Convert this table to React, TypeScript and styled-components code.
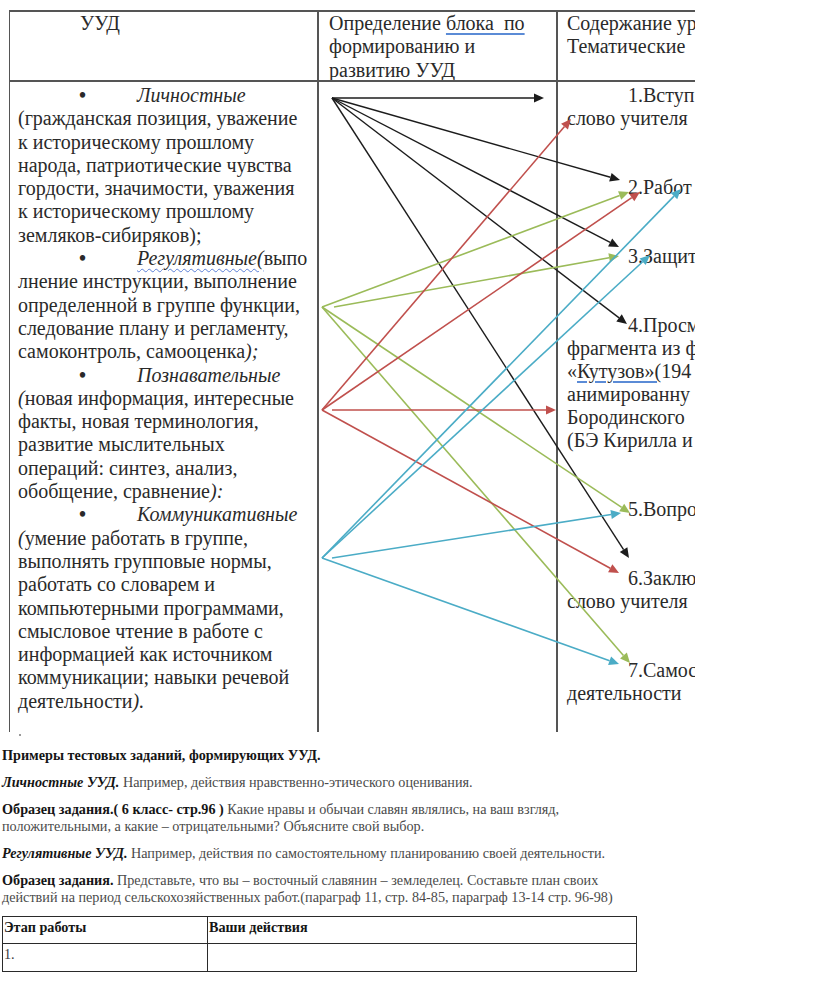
import React from "react";
import styled, { createGlobalStyle } from "styled-components";

const Global = createGlobalStyle`
  html, body { margin: 0; padding: 0; background: #ffffff; }
  body { font-family: "Liberation Serif", "Times New Roman", serif; color: #222; }
`;

const Page = styled.div`
  width: 816px;
  min-height: 1003px;
  overflow: hidden;
`;

const ScanWrap = styled.div`
  position: relative;
  margin: 10px 0 0 9px;
  width: 686px;
  height: 722px;
  overflow: hidden;
`;

const ScanTable = styled.div`
  display: grid;
  grid-template-columns: 309px 239px 240px;
  grid-template-rows: 70px 650px;
  width: 789px;
  border-top: 2px solid #555;
  border-left: 1.5px solid #555;
  border-bottom: 2px solid #555;
  box-sizing: border-box;
  font-size: 20px;
  line-height: 23.3px;
  color: #2a2a2a;
  font-family: "Liberation Serif", "Times New Roman", serif;
`;

const Cell = styled.div<{ $head?: boolean; $last?: boolean; $pad: number }>`
  box-sizing: border-box;
  padding: ${(p) => (p.$head ? "0px" : "2px")} 2px 0 ${(p) => p.$pad}px;
  border-right: ${(p) => (p.$last ? "none" : "2px solid #555")};
  border-bottom: ${(p) => (p.$head ? "2px solid #555" : "none")};
  white-space: nowrap;
  overflow: hidden;
`;

const HeadText = styled.div<{ $indent?: number }>`
  padding-left: ${(p) => p.$indent ?? 0}px;
`;

const Spell = styled.span`
  text-decoration: underline;
  text-decoration-color: #5b8bd6;
  text-decoration-thickness: 1.5px;
  text-underline-offset: 3px;
`;

const Wavy = styled.span`
  font-style: italic;
  text-decoration: underline wavy #5b7fd6;
  text-decoration-thickness: 1px;
  text-underline-offset: 3px;
`;

const Em = styled.em`
  font-style: italic;
`;

const BulletLine = styled.div`
  display: flex;
`;

const BulletDot = styled.span`
  margin-left: 61px;
  width: 58px;
  flex: none;
  font-weight: bold;
`;

const Lines = styled.div``;

const Item = styled.div<{ $before: number }>`
  margin-top: ${(p) => p.$before * 23}px;
  line-height: 23px;
`;

const ItemHead = styled.div`
  padding-left: 61px;
`;

const Arrows = styled.svg`
  position: absolute;
  top: 0;
  left: 0;
  pointer-events: none;
`;

const Speck = styled.div`
  height: 6px;
  position: relative;
  &::after {
    content: "";
    position: absolute;
    left: 19px;
    top: 2px;
    width: 2px;
    height: 2px;
    background: #9a9a9a;
  }
`;

const Doc = styled.div`
  width: 645px;
  padding: 9px 0 0 2px;
  font-size: 14.2px;
  line-height: 16.6px;
  color: #4a4a4a;
  font-family: "Liberation Serif", "Times New Roman", serif;
`;

const P = styled.p`
  margin: 0 0 10.5px;
`;

const B = styled.b`
  color: #151515;
  font-weight: bold;
`;

const BI = styled.b`
  color: #151515;
  font-weight: bold;
  font-style: italic;
`;

const PlanTable = styled.table`
  border-collapse: collapse;
  width: 635px;
  margin-top: 0;
  font-size: 14.2px;
  line-height: 16.6px;
`;

const Td = styled.td<{ $w?: number; $h: number }>`
  border: 1.5px solid #2a2a2a;
  padding: 2px 1px 0;
  vertical-align: top;
  height: ${(p) => p.$h}px;
  box-sizing: border-box;
  width: ${(p) => (p.$w ? `${p.$w}px` : "auto")};
  color: #3a3a3a;
`;

type Arrow = { from: [number, number]; to: [number, number] };
type Group = { color: string; width: number; arrows: Arrow[] };

const groups: Group[] = [
  {
    color: "#1c1c1c",
    width: 1.4,
    arrows: [
      { from: [332, 98], to: [544, 98] },
      { from: [332, 98], to: [620, 180] },
      { from: [332, 98], to: [619, 247] },
      { from: [332, 98], to: [627, 324] },
      { from: [332, 98], to: [629, 558] },
    ],
  },
  {
    color: "#9bbb59",
    width: 1.6,
    arrows: [
      { from: [322, 307], to: [629, 192] },
      { from: [334, 307], to: [619, 256] },
      { from: [322, 307], to: [630, 513] },
      { from: [322, 307], to: [630, 663] },
    ],
  },
  {
    color: "#c0504d",
    width: 1.6,
    arrows: [
      { from: [322, 410], to: [571, 119] },
      { from: [322, 410], to: [640, 192] },
      { from: [332, 410], to: [556, 410] },
      { from: [322, 410], to: [619, 573] },
    ],
  },
  {
    color: "#4bacc6",
    width: 1.6,
    arrows: [
      { from: [322, 558], to: [681, 189] },
      { from: [322, 558], to: [650, 255] },
      { from: [332, 558], to: [621, 513] },
      { from: [322, 558], to: [619, 664] },
    ],
  },
];

function arrowParts(a: Arrow) {
  const [x1, y1] = a.from;
  const [x2, y2] = a.to;
  const dx = x2 - x1;
  const dy = y2 - y1;
  const len = Math.hypot(dx, dy);
  const ux = dx / len;
  const uy = dy / len;
  const hl = 10;
  const hw = 4.5;
  const bx = x2 - ux * hl;
  const by = y2 - uy * hl;
  const pts = `${x2},${y2} ${bx - uy * hw},${by + ux * hw} ${bx + uy * hw},${by - ux * hw}`;
  return { bx, by, pts };
}

const ArrowLayer: React.FC = () => (
  <Arrows width={686} height={722} viewBox="9 10 686 722">
    {groups.map((g, gi) =>
      g.arrows.map((a, ai) => {
        const { bx, by, pts } = arrowParts(a);
        return (
          <g key={`${gi}-${ai}`}>
            <line x1={a.from[0]} y1={a.from[1]} x2={bx} y2={by} stroke={g.color} strokeWidth={g.width} />
            <polygon points={pts} fill={g.color} />
          </g>
        );
      })
    )}
  </Arrows>
);

const App: React.FC = () => (
  <Page>
    <Global />
    <ScanWrap>
      <ScanTable>
        <Cell $head $pad={8}>
          <HeadText $indent={62}>УУД</HeadText>
        </Cell>
        <Cell $head $pad={10}>
          <HeadText>
            Определение <Spell>блока&nbsp; по</Spell>
          </HeadText>
          <HeadText>формированию и</HeadText>
          <HeadText>развитию УУД</HeadText>
        </Cell>
        <Cell $head $last $pad={9}>
          <HeadText>Содержание ур</HeadText>
          <HeadText>Тематические</HeadText>
        </Cell>

        <Cell $pad={8}>
          <BulletLine>
            <BulletDot>•</BulletDot>
            <Em>Личностные</Em>
          </BulletLine>
          <Lines>
            (гражданская позиция, уважение
            <br />к историческому прошлому
            <br />народа, патриотические чувства
            <br />гордости, значимости, уважения
            <br />к историческому прошлому
            <br />земляков-сибиряков);
          </Lines>
          <BulletLine>
            <BulletDot>•</BulletDot>
            <span>
              <Wavy>Регулятивные(</Wavy>выпо
            </span>
          </BulletLine>
          <Lines>
            лнение инструкции, выполнение
            <br />определенной в группе функции,
            <br />следование плану и регламенту,
            <br />самоконтроль, самооценка<Em>);</Em>
          </Lines>
          <BulletLine>
            <BulletDot>•</BulletDot>
            <Em>Познавательные</Em>
          </BulletLine>
          <Lines>
            <Em>(</Em>новая информация, интересные
            <br />факты, новая терминология,
            <br />развитие мыслительных
            <br />операций: синтез, анализ,
            <br />обобщение, сравнение<Em>):</Em>
          </Lines>
          <BulletLine>
            <BulletDot>•</BulletDot>
            <Em>Коммуникативные</Em>
          </BulletLine>
          <Lines>
            <Em>(</Em>умение работать в группе,
            <br />выполнять групповые нормы,
            <br />работать со словарем и
            <br />компьютерными программами,
            <br />смысловое чтение в работе с
            <br />информацией как источником
            <br />коммуникации; навыки речевой
            <br />деятельности<Em>).</Em>
          </Lines>
        </Cell>

        <Cell $pad={10} />

        <Cell $last $pad={9}>
          <Item $before={0}>
            <ItemHead>1.Вступ</ItemHead>
            слово учителя
          </Item>
          <Item $before={2}>
            <ItemHead>2.Работ</ItemHead>
          </Item>
          <Item $before={2}>
            <ItemHead>3.Защит</ItemHead>
          </Item>
          <Item $before={2}>
            <ItemHead>4.Просм</ItemHead>
            фрагмента из ф
            <br />«<Spell>Кутузов»(</Spell>194
            <br />анимированну
            <br />Бородинского
            <br />(БЭ Кирилла и
          </Item>
          <Item $before={2}>
            <ItemHead>5.Вопро</ItemHead>
          </Item>
          <Item $before={2}>
            <ItemHead>6.Заклю</ItemHead>
            слово учителя
          </Item>
          <Item $before={2}>
            <ItemHead>7.Самос</ItemHead>
            деятельности
          </Item>
        </Cell>
      </ScanTable>
      <ArrowLayer />
    </ScanWrap>
    <Speck />
    <Doc>
      <P>
        <B>Примеры тестовых заданий, формирующих УУД.</B>
      </P>
      <P>
        <BI>Личностные УУД.</BI> Например, действия нравственно-этического оценивания.
      </P>
      <P>
        <B>Образец задания.( 6 класс- стр.96 )</B> Какие нравы и обычаи славян являлись, на ваш взгляд,
        положительными, а какие – отрицательными? Объясните свой выбор.
      </P>
      <P>
        <BI>Регулятивные УУД.</BI> Например, действия по самостоятельному планированию своей деятельности.
      </P>
      <P>
        <B>Образец задания.</B> Представьте, что вы – восточный славянин – земледелец. Составьте план своих
        действий на период сельскохозяйственных работ.(параграф 11, стр. 84-85, параграф 13-14 стр. 96-98)
      </P>
      <PlanTable>
        <tbody>
          <tr>
            <Td $w={205} $h={27}>
              <B>Этап работы</B>
            </Td>
            <Td $h={27}>
              <B>Ваши действия</B>
            </Td>
          </tr>
          <tr>
            <Td $w={205} $h={28}>
              1.
            </Td>
            <Td $h={28} />
          </tr>
        </tbody>
      </PlanTable>
    </Doc>
  </Page>
);

export default App;
